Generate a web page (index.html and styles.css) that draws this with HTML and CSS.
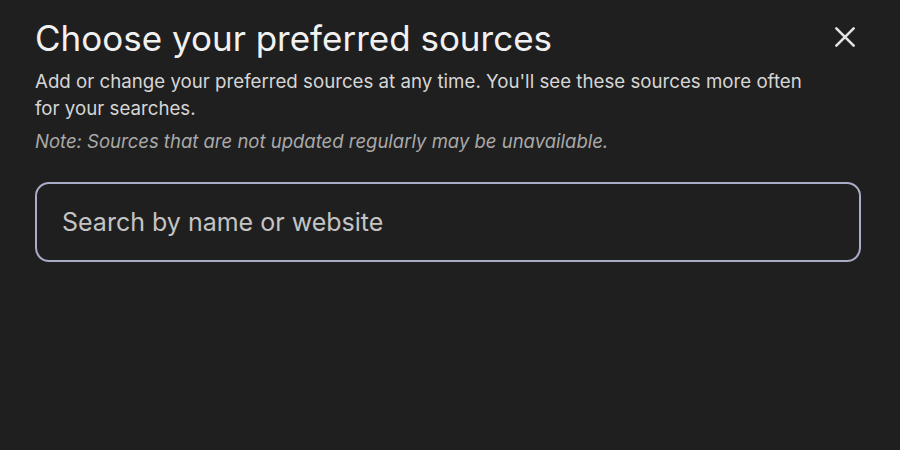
FILE: index.html
```html
<!DOCTYPE html>
<html>
<head>
<meta charset="utf-8">
<link rel="stylesheet" href="styles.css">
</head>
<body>
<div class="dialog">
  <div class="header">
    <h1 class="title">Choose your preferred sources</h1>
    <button class="close" aria-label="Close">
      <svg width="26" height="26" viewBox="0 0 24 24"><path d="M4 4 L20 20 M20 4 L4 20" stroke="#e3e3e3" stroke-width="2.4" stroke-linecap="round" fill="none"/></svg>
    </button>
  </div>
  <p class="desc">Add or change your preferred sources at any time. You'll see these sources more often for your searches.</p>
  <p class="note">Note: Sources that are not updated regularly may be unavailable.</p>
  <div class="search">
    <input class="search-input" type="text" placeholder="Search by name or website">
  </div>
</div>
</body>
</html>
```
FILE: styles.css
```css
html, body {
  margin: 0;
  padding: 0;
  background: #1f1f1f;
  height: 100%;
}
body {
  font-family: "Inter", "Roboto", sans-serif;
  color: #e3e3e3;
}
.dialog {
  padding: 14px 39px 0 35px;
}
.header {
  display: flex;
  justify-content: space-between;
  align-items: flex-start;
}
.title {
  margin: 0;
  font-size: 35px;
  font-weight: 400;
  line-height: 48px;
  color: #f1f1f1;
}
.close {
  background: none;
  border: none;
  padding: 0;
  margin-top: 10px;
  margin-right: 3px;
  width: 26px;
  height: 26px;
  cursor: pointer;
}
.desc {
  margin: 6px 0 0;
  width: 780px;
  font-size: 18.7px;
  line-height: 27px;
  color: #d6d6d6;
}
.note {
  margin: 7px 0 0;
  font-size: 18.5px;
  line-height: 25px;
  font-style: italic;
  color: #a9a9a9;
}
.search {
  margin-top: 28px;
  width: 826px;
  height: 80px;
  box-sizing: border-box;
  border: 2px solid #a9acc8;
  border-radius: 14px;
  display: flex;
  align-items: center;
  padding: 0 25px;
}
.search-input {
  flex: 1;
  background: transparent;
  border: none;
  outline: none;
  font-family: "Inter", "Roboto", sans-serif;
  font-size: 25px;
  color: #e3e3e3;
  padding: 0;
}
.search-input::placeholder {
  color: #c4c4c4;
}
```
